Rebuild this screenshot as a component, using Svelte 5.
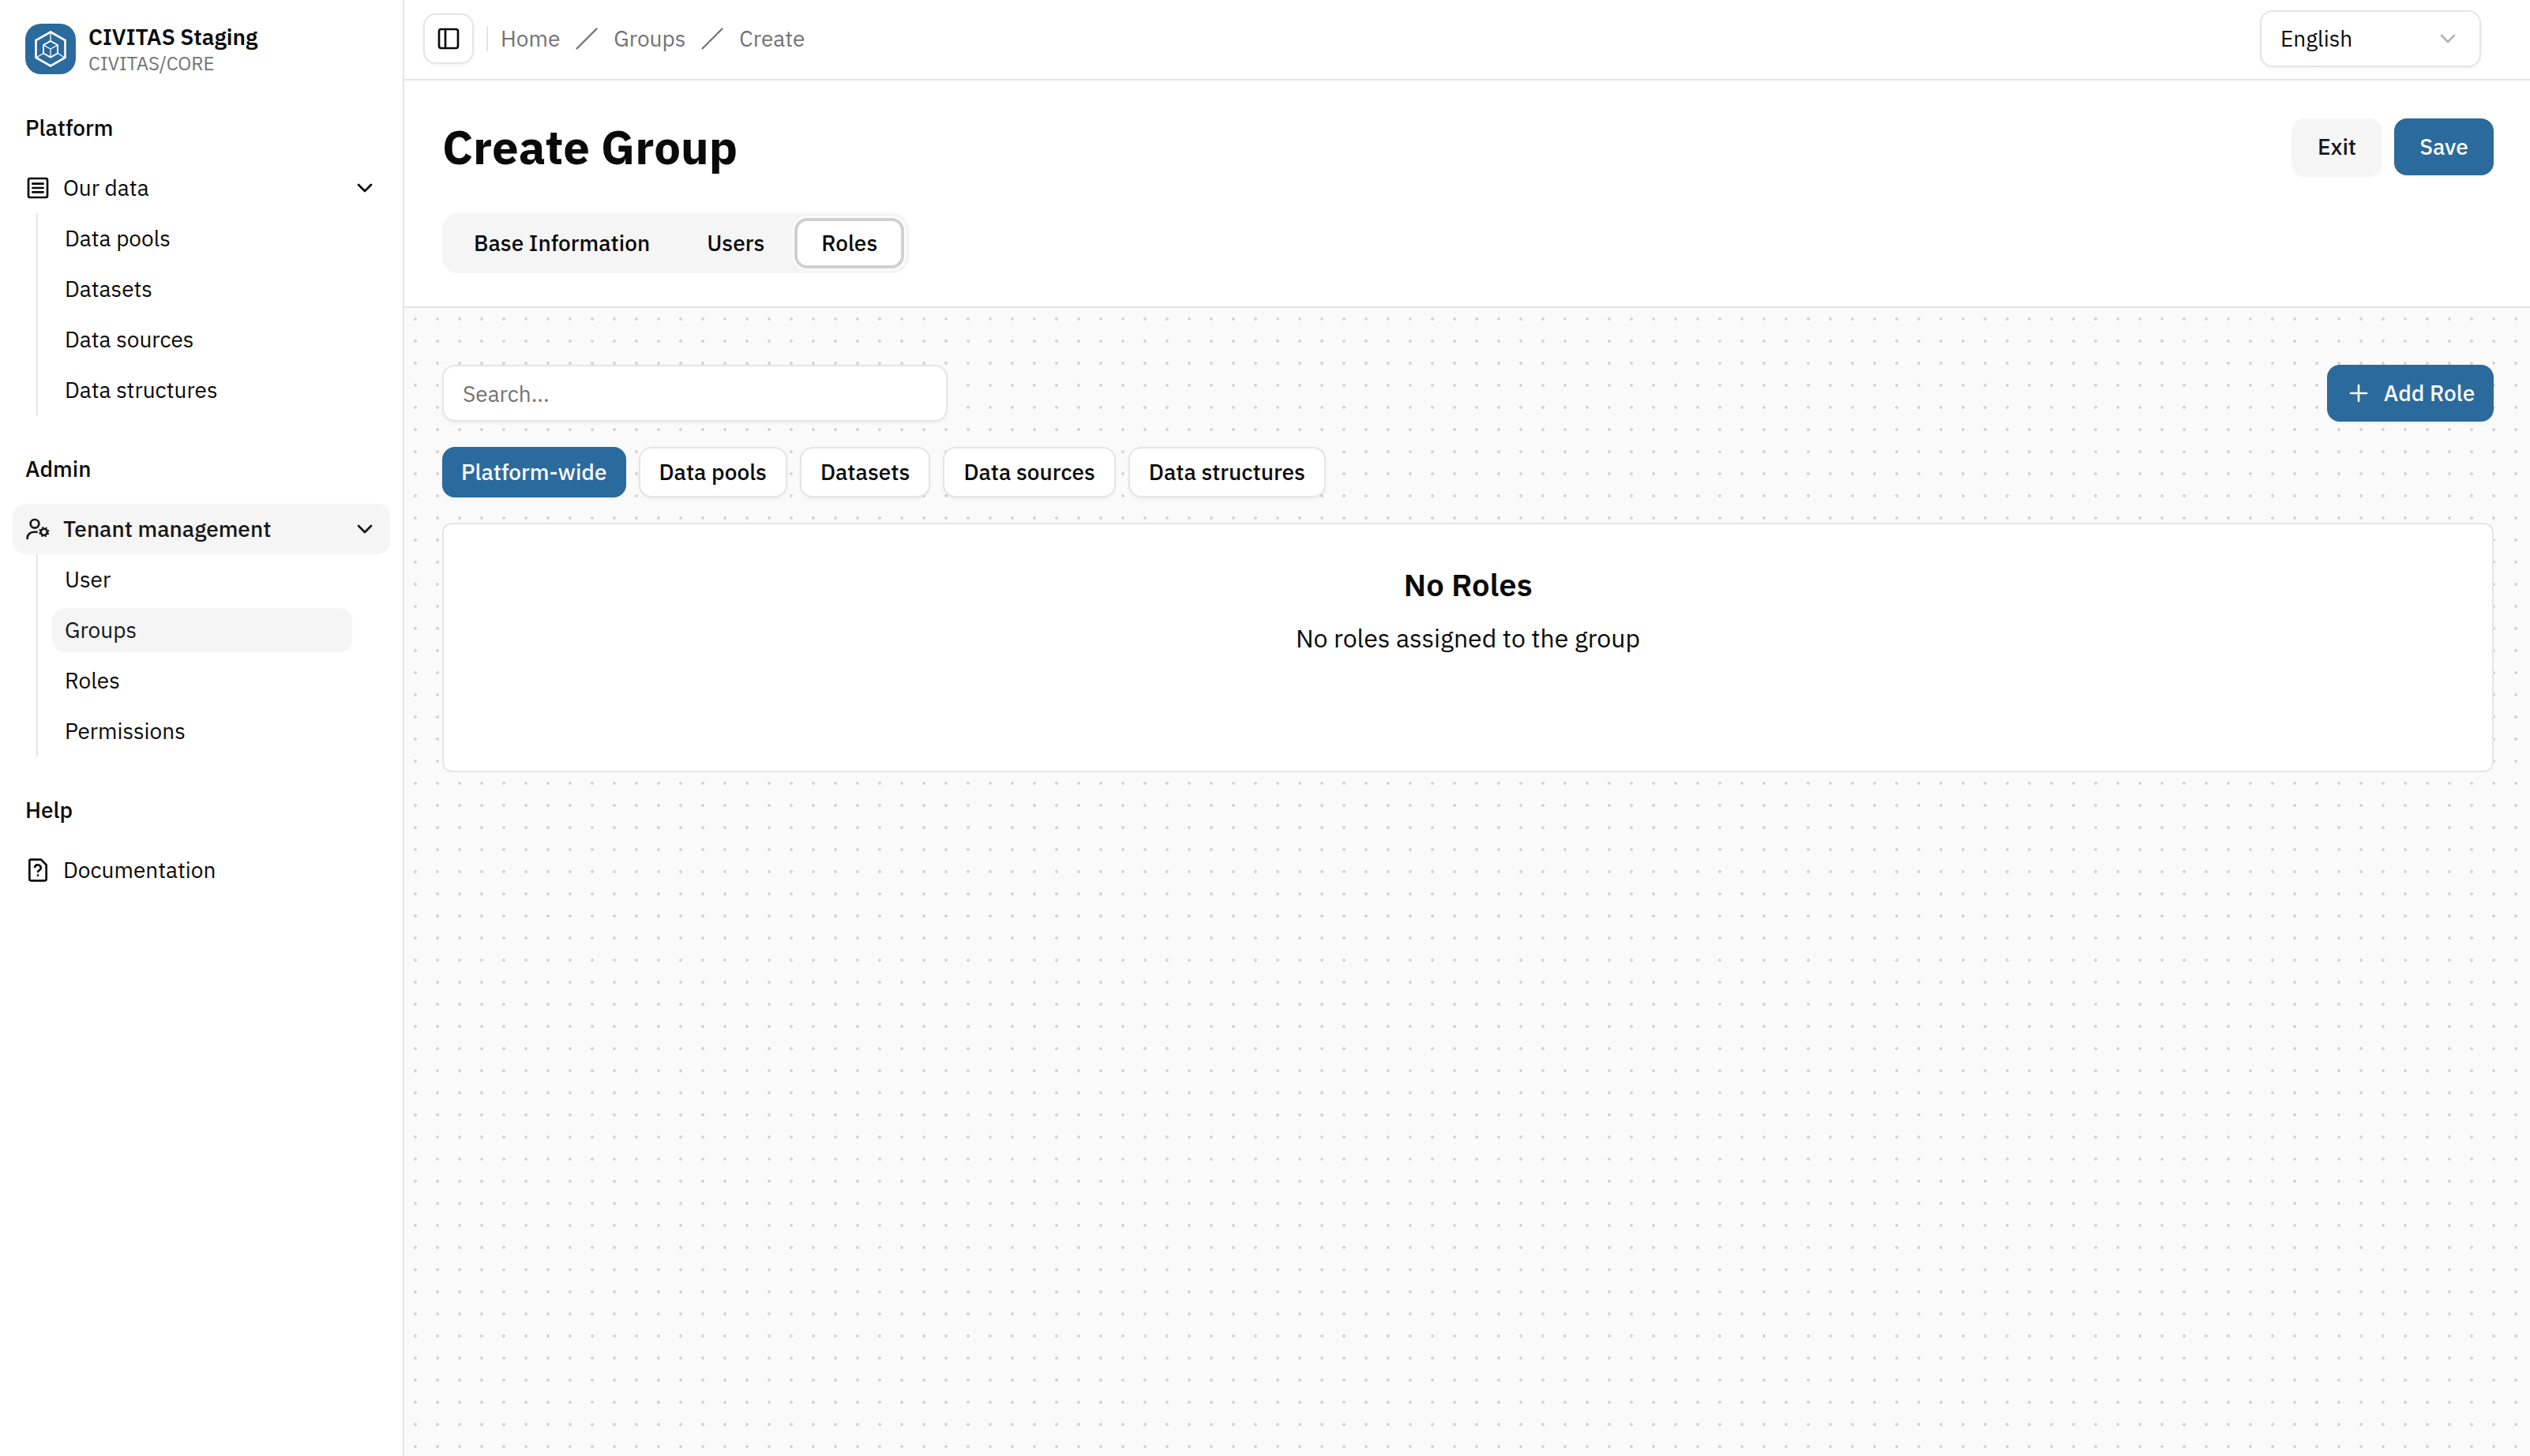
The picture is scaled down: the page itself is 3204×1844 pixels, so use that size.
<script>
  const sections = [
    {
      label: 'Platform',
      items: [
        {
          title: 'Our data',
          icon: 'list',
          children: ['Data pools', 'Datasets', 'Data sources', 'Data structures']
        }
      ]
    },
    {
      label: 'Admin',
      items: [
        {
          title: 'Tenant management',
          icon: 'user-cog',
          active: true,
          children: ['User', 'Groups', 'Roles', 'Permissions']
        }
      ]
    },
    {
      label: 'Help',
      items: [{ title: 'Documentation', icon: 'file-question', children: [] }]
    }
  ];

  const crumbs = ['Home', 'Groups', 'Create'];
  const tabs = ['Base Information', 'Users', 'Roles'];
  const scopes = ['Platform-wide', 'Data pools', 'Datasets', 'Data sources', 'Data structures'];

  let page = $state('Groups');
  let tab = $state('Roles');
  let scope = $state('Platform-wide');
  let search = $state('');
</script>

{#snippet chevron()}
  <svg class="icon chevron" viewBox="0 0 24 24"><path d="m6 9 6 6 6-6" /></svg>
{/snippet}

<div class="app">
  <aside class="sidebar">
    <div class="brand">
      <svg class="brand__logo" viewBox="0 0 64 64">
        <rect width="64" height="64" rx="20" />
        <path class="outer" d="M32 10.5 50.5 21v22L32 53.5 13.5 43V21Z" />
        <path class="inner" d="M32 22 41 27v10.500L32 42.500 23 37.500V27Z" />
        <path class="thin" d="M32 10v12M23 37.500 14 43M41 37.500 50 43M23 27l9 5 9-5M32 32v10.500" />
      </svg>
      <div class="brand__text">
        <span class="brand__name">CIVITAS Staging</span>
        <span class="brand__sub">CIVITAS/CORE</span>
      </div>
    </div>

    {#each sections as section}
      <nav class="section">
        <div class="section__label">{section.label}</div>
        {#each section.items as item}
          <button type="button" class="nav-item" class:nav-item--active={item.active}>
            <svg class="icon" viewBox="0 0 24 24">
              {#if item.icon === 'list'}
                <rect x="3" y="3" width="18" height="18" rx="1.5" />
                <path d="M7 8h10M7 12h10M7 16h10" />
              {:else if item.icon === 'user-cog'}
                <circle cx="9" cy="7" r="4" />
                <path d="M2 21v-.5a6 5.700 0 0 1 6-5.700h3" />
                <circle cx="17.800" cy="14.800" r="3" />
                <circle class="teeth" cx="17.800" cy="14.800" r="4.300" />
              {:else}
                <path d="M15 2H5.500A1.500 1.500 0 0 0 4 3.500v17A1.500 1.500 0 0 0 5.500 22h13a1.500 1.500 0 0 0 1.500-1.500V7Z" />
                <path d="M9.100 9a3 3 0 0 1 5.800 1c0 2-2.900 2.600-2.900 3.500M12 17h.01" />
              {/if}
            </svg>
            <span>{item.title}</span>
            {#if item.children.length}{@render chevron()}{/if}
          </button>
          {#if item.children.length}
            <ul class="sub">
              {#each item.children as child}
                <li>
                  <button
                    type="button"
                    class="sub__link"
                    class:sub__link--active={item.active && child === page}
                    onclick={() => (page = child)}>{child}</button
                  >
                </li>
              {/each}
            </ul>
          {/if}
        {/each}
      </nav>
    {/each}
  </aside>

  <main class="main">
    <header class="topbar">
      <button type="button" class="toggle" aria-label="Toggle sidebar">
        <svg class="icon" viewBox="0 0 24 24">
          <rect x="3" y="3" width="18" height="18" rx="2" />
          <path d="M9 3v18" />
        </svg>
      </button>
      <span class="divider"></span>
      <nav class="crumbs">
        {#each crumbs as crumb, i}
          {#if i > 0}
            <svg class="icon slash" viewBox="0 0 24 24"><path d="M22 2 2 22" /></svg>
          {/if}
          <span>{crumb}</span>
        {/each}
      </nav>
      <button type="button" class="language">
        <span>English</span>
        {@render chevron()}
      </button>
    </header>

    <section class="page-head">
      <div class="page-head__row">
        <h1>Create Group</h1>
        <div class="actions">
          <button type="button" class="btn btn--secondary">Exit</button>
          <button type="button" class="btn btn--primary">Save</button>
        </div>
      </div>
      <div class="tabs" role="tablist">
        {#each tabs as name}
          <button
            type="button"
            role="tab"
            class="tab"
            class:tab--active={tab === name}
            aria-selected={tab === name}
            onclick={() => (tab = name)}>{name}</button
          >
        {/each}
      </div>
    </section>

    <section class="content">
      <div class="toolbar">
        <input class="search" type="text" placeholder="Search..." bind:value={search} />
        <button type="button" class="btn btn--primary btn--add">
          <svg class="icon" viewBox="0 0 24 24"><path d="M4.500 12h15M12 4.500v15" /></svg>
          Add Role
        </button>
      </div>
      <div class="scopes">
        {#each scopes as name}
          <button
            type="button"
            class="scope"
            class:scope--active={scope === name}
            onclick={() => (scope = name)}>{name}</button
          >
        {/each}
      </div>
      <div class="empty">
        <h2>No Roles</h2>
        <p>No roles assigned to the group</p>
      </div>
    </section>
  </main>
</div>

<style>
  :global(body) {
    margin: 0;
    background: #fff;
  }

  .app {
    display: flex;
    height: 1844px;
    overflow: hidden;
    font-family: 'IBM Plex Sans', Roboto, sans-serif;
    font-size: 28px;
    line-height: 40px;
    color: #0a0a0a;
  }

  .app * {
    box-sizing: border-box;
  }

  button,
  input {
    margin: 0;
    padding: 0;
    border: 0;
    background: none;
    font: inherit;
    color: inherit;
    white-space: nowrap;
  }

  .icon {
    flex: none;
    width: 32px;
    height: 32px;
    fill: none;
    stroke: currentColor;
    stroke-width: 2;
    stroke-linecap: round;
    stroke-linejoin: round;
  }

  .teeth {
    stroke-width: 1.4;
    stroke-linecap: butt;
    stroke-dasharray: 1.6 1.777;
    stroke-dashoffset: -0.9;
  }

  .sidebar {
    flex: none;
    width: 512px;
    padding: 30px 16px 0;
    border-right: 2px solid #e5e5e5;
  }

  .brand {
    display: flex;
    gap: 16px;
    height: 64px;
    padding-left: 16px;
  }

  .brand__logo {
    width: 64px;
    height: 64px;
    fill: #2b6a9d;
    stroke: #fff;
  }

  .brand__logo rect {
    stroke: none;
  }

  .brand__logo .outer {
    stroke-width: 2.6;
  }

  .brand__logo .inner {
    stroke-width: 2;
  }

  .brand__logo .thin {
    fill: none;
    stroke-width: 1.3;
  }

  .brand__text {
    display: flex;
    flex-direction: column;
  }

  .brand__name {
    font-weight: 600;
    line-height: 34px;
  }

  .brand__sub {
    font-size: 24px;
    line-height: 32px;
    color: #737373;
  }

  .section {
    padding-top: 36px;
  }

  .section__label {
    height: 64px;
    margin-bottom: 12px;
    padding-left: 16px;
    font-weight: 500;
    line-height: 64px;
  }

  .nav-item {
    display: flex;
    align-items: center;
    gap: 16px;
    width: 478px;
    height: 64px;
    padding: 0 16px;
    border-radius: 16px;
    text-align: left;
  }

  .nav-item .chevron {
    margin-left: auto;
  }

  .nav-item--active {
    background: #f5f5f5;
    font-weight: 500;
    color: #171717;
  }

  .sub {
    margin: 0 0 0 30px;
    padding: 0 0 0 18px;
    border-left: 2px solid #e5e5e5;
    list-style: none;
  }

  .sub li {
    padding: 4px 0;
  }

  .sub__link {
    display: block;
    width: 380px;
    height: 56px;
    padding: 0 16px;
    border-radius: 16px;
    text-align: left;
  }

  .sub__link--active {
    background: #f5f5f5;
    color: #171717;
  }

  .main {
    display: flex;
    flex: 1;
    flex-direction: column;
    min-width: 0;
  }

  .topbar {
    display: flex;
    flex: none;
    align-items: center;
    height: 102px;
    padding: 0 62px 2px 24px;
    border-bottom: 2px solid #e5e5e5;
  }

  .toggle {
    display: flex;
    align-items: center;
    justify-content: center;
    width: 64px;
    height: 64px;
    border: 2px solid #e5e5e5;
    border-radius: 16px;
    box-shadow: 0 2px 4px rgba(0, 0, 0, 0.05);
  }

  .divider {
    width: 2px;
    height: 32px;
    margin: 0 16px;
    background: #e5e5e5;
  }

  .crumbs {
    display: flex;
    align-items: center;
    gap: 19px;
    color: #737373;
  }

  .slash {
    width: 30px;
    height: 30px;
    stroke-width: 1.8;
  }

  .language {
    display: flex;
    align-items: center;
    justify-content: space-between;
    width: 280px;
    height: 72px;
    margin-left: auto;
    padding: 0 24px;
    border: 2px solid #e5e5e5;
    border-radius: 16px;
    box-shadow: 0 2px 4px rgba(0, 0, 0, 0.05);
  }

  .language .chevron {
    opacity: 0.3;
  }

  .page-head {
    flex: none;
    height: 288px;
    padding: 48px 46px 0 48px;
    border-bottom: 2px solid #e5e5e5;
  }

  .page-head__row {
    display: flex;
    align-items: flex-start;
    justify-content: space-between;
    height: 120px;
  }

  h1 {
    margin: 0;
    font-size: 60px;
    font-weight: 700;
    line-height: 72px;
  }

  .actions {
    display: flex;
    gap: 16px;
  }

  .btn {
    width: 126px;
    height: 72px;
    border-radius: 16px;
    font-weight: 500;
    box-shadow: 0 2px 4px rgba(0, 0, 0, 0.05);
  }

  .btn--primary {
    background: #2b6a9d;
    color: #fafafa;
  }

  .btn--secondary {
    width: 113px;
    background: #f5f5f5;
    color: #171717;
  }

  .btn--add {
    display: flex;
    align-items: center;
    justify-content: center;
    gap: 16px;
    width: 211px;
  }

  .tabs {
    display: inline-flex;
    gap: 4px;
    height: 76px;
    padding: 6px;
    border-radius: 20px;
    background: #f5f5f5;
  }

  .tab {
    height: 64px;
    padding: 0 34px;
    border-radius: 16px;
    font-weight: 500;
  }

  .tab--active {
    border: 4px solid #d0d0d0;
    padding: 0 30px;
    background: #fff;
    box-shadow: 0 0 0 2px #fff;
  }

  .content {
    flex: 1;
    padding: 72px 46px 0 48px;
    background: #fafafa radial-gradient(circle, #d4d4d4 2px, transparent 2px) 0 0 / 28px 28px;
  }

  .toolbar {
    display: flex;
    justify-content: space-between;
  }

  .search {
    width: 640px;
    height: 72px;
    padding: 0 24px;
    border: 2px solid #e5e5e5;
    border-radius: 16px;
    background: #fff;
    box-shadow: 0 2px 4px rgba(0, 0, 0, 0.05);
  }

  .search::placeholder {
    color: #737373;
    opacity: 1;
  }

  .scopes {
    display: flex;
    gap: 16px;
    margin: 32px 0;
  }

  .scope {
    height: 64px;
    padding: 0 24px;
    border: 2px solid #e5e5e5;
    border-radius: 16px;
    background: #fff;
    font-weight: 500;
    box-shadow: 0 2px 4px rgba(0, 0, 0, 0.05);
  }

  .scope--active {
    padding: 0 24px;
    border: 0;
    background: #2b6a9d;
    color: #fafafa;
  }

  .empty {
    height: 316px;
    padding-top: 48px;
    border: 2px solid #e5e5e5;
    border-radius: 12px;
    background: #fff;
    text-align: center;
  }

  h2 {
    margin: 0;
    font-size: 40px;
    font-weight: 600;
    line-height: 56px;
  }

  p {
    margin: 16px 0 0;
    font-size: 32px;
    line-height: 48px;
  }
</style>
